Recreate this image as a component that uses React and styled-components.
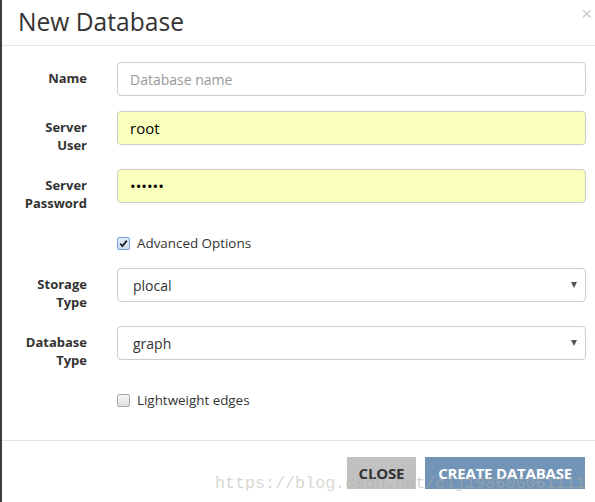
import React from 'react';
import styled, { createGlobalStyle } from 'styled-components';

const GlobalStyle = createGlobalStyle`
    html, body {
        margin: 0;
        padding: 0;
        background: #ffffff;
        font-family: "Open Sans", "Liberation Sans", sans-serif;
        color: #333;
    }
`;

const Page = styled.div`
    width: 595px;
    height: 502px;
    display: flex;
    overflow: hidden;
    position: relative;
`;

const Backdrop = styled.div`
    width: 2px;
    flex: none;
    background: #3d3d3d;
`;

const Modal = styled.div`
    flex: 1;
    display: flex;
    flex-direction: column;
    background: #fff;
`;

const Header = styled.div`
    box-sizing: border-box;
    height: 46px;
    flex: none;
    border-bottom: 1px solid #e5e5e5;
    display: flex;
    align-items: flex-start;
    justify-content: space-between;
    padding: 0 3px 0 16px;
`;

const Title = styled.h4`
    margin: 0;
    font-size: 24.6px;
    font-weight: 400;
    line-height: 44px;
    color: #333;
`;

const CloseX = styled.span`
    font-family: "Liberation Sans", sans-serif;
    font-size: 19px;
    line-height: 28px;
    color: #000;
    opacity: 0.2;
`;

const Body = styled.div`
    padding: 16px 9px 15px 0;
`;

const Group = styled.div`
    display: grid;
    grid-template-columns: 85px 1fr;
    column-gap: 30px;
    margin-bottom: 15px;
`;

const Label = styled.label`
    padding-top: 7px;
    font-size: 13px;
    font-weight: 700;
    line-height: 18px;
    text-align: right;
    color: #333;
`;

const Input = styled.input`
    box-sizing: border-box;
    height: 34px;
    width: 100%;
    border: 1px solid #ccc;
    border-radius: 4px;
    padding: 6px 12px;
    font-family: "Open Sans", "Liberation Sans", sans-serif;
    font-size: ${p => (p.$filled ? '15px' : '14px')};
    color: #000;
    background: ${p => (p.$filled ? '#faffbd' : '#fff')};
    outline: none;
    &::placeholder {
        color: #999;
    }
`;

const SelectBox = styled.div`
    box-sizing: border-box;
    height: 34px;
    border: 1px solid #ccc;
    border-radius: 4px;
    padding: 0 8px 0 15px;
    display: flex;
    align-items: center;
    justify-content: space-between;
    font-size: 14px;
    color: #333;
`;

const Arrow = styled.span`
    width: 0;
    height: 0;
    border-left: 3.5px solid transparent;
    border-right: 3.5px solid transparent;
    border-top: 6px solid #555;
`;

const CheckRow = styled.label`
    grid-column: 2;
    display: flex;
    align-items: center;
    gap: 7px;
    padding-top: 7px;
    padding-bottom: 1px;
    line-height: 18px;
    font-size: 13.4px;
    color: #333;
`;

const Box = styled.span`
    box-sizing: border-box;
    width: 13px;
    height: 13px;
    border-radius: 2px;
    border: 1px solid ${p => (p.$checked ? '#7a9fd8' : '#a8a8a8')};
    background: ${p => (p.$checked ? 'linear-gradient(#e4ecf8, #cfdcf0)' : 'linear-gradient(#f6f6f6, #dedede)')};
    display: flex;
    align-items: center;
    justify-content: center;
`;

const Footer = styled.div`
    border-top: 1px solid #e5e5e5;
    padding: 16px 10px;
    display: flex;
    justify-content: flex-end;
    gap: 9px;
`;

const Button = styled.button`
    height: 32px;
    border: none;
    border-radius: 0;
    padding: 0 ${p => (p.$primary ? '13px' : '12px')};
    font-family: "Open Sans", "Liberation Sans", sans-serif;
    font-size: 15px;
    font-weight: 700;
    letter-spacing: -0.2px;
    background: ${p => (p.$primary ? '#7294b6' : '#c1c1c1')};
    color: ${p => (p.$primary ? '#fff' : '#333')};
`;

const Watermark = styled.div`
    position: absolute;
    left: 215px;
    top: 474px;
    font-family: "Liberation Mono", monospace;
    font-size: 16.7px;
    color: rgba(175, 175, 165, 0.5);
    white-space: nowrap;
    pointer-events: none;
`;

const Check = () => (
    <svg width="9" height="9" viewBox="0 0 9 9">
        <path d="M1.2 4.6 L3.4 7 L7.8 1.6" fill="none" stroke="#222" strokeWidth="1.8" />
    </svg>
);

export default function App() {
    return (
        <>
            <GlobalStyle />
            <Page>
                <Backdrop />
                <Modal>
                    <Header>
                        <Title>New Database</Title>
                        <CloseX>×</CloseX>
                    </Header>
                    <Body>
                        <Group>
                            <Label>Name</Label>
                            <Input placeholder="Database name" />
                        </Group>
                        <Group>
                            <Label>Server<br />User</Label>
                            <Input $filled defaultValue="root" />
                        </Group>
                        <Group>
                            <Label>Server<br />Password</Label>
                            <Input $filled type="password" defaultValue="123456" />
                        </Group>
                        <Group>
                            <CheckRow>
                                <Box $checked><Check /></Box>
                                Advanced Options
                            </CheckRow>
                        </Group>
                        <Group>
                            <Label>Storage<br />Type</Label>
                            <SelectBox>plocal<Arrow /></SelectBox>
                        </Group>
                        <Group>
                            <Label>Database<br />Type</Label>
                            <SelectBox>graph<Arrow /></SelectBox>
                        </Group>
                        <Group>
                            <CheckRow>
                                <Box />
                                Lightweight edges
                            </CheckRow>
                        </Group>
                    </Body>
                    <Footer>
                        <Button>CLOSE</Button>
                        <Button $primary>CREATE DATABASE</Button>
                    </Footer>
                </Modal>
                <Watermark>https://blog.csdn.net/clj198606061111</Watermark>
            </Page>
        </>
    );
}
